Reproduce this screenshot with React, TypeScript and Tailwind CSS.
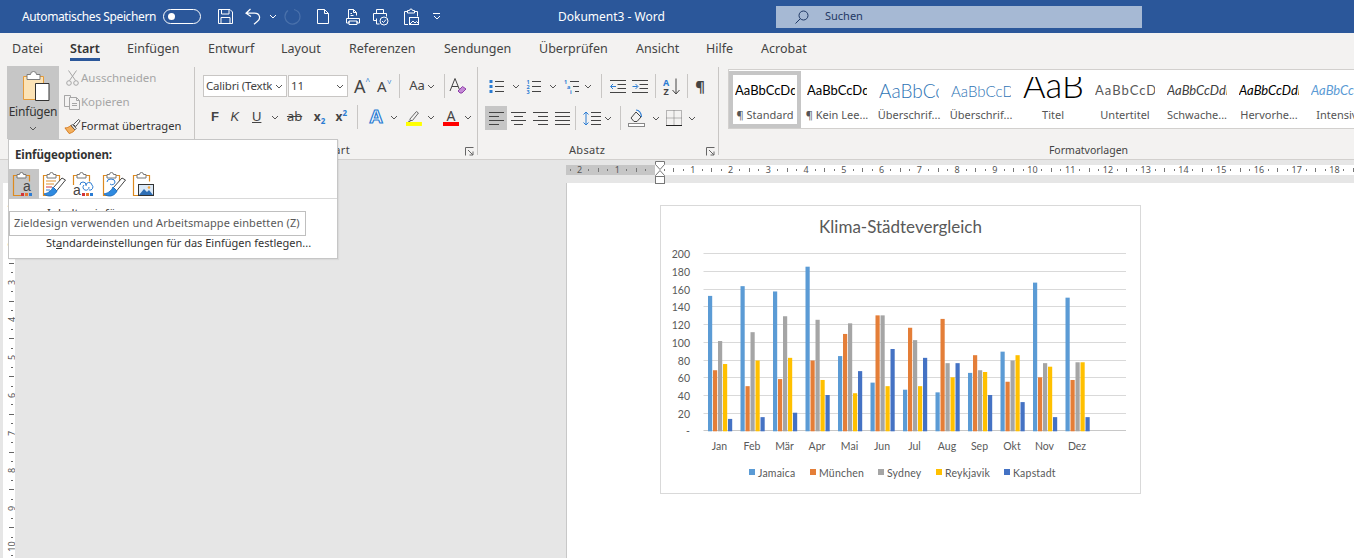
import type { ReactNode } from "react";

const months = ["Jan", "Feb", "Mär", "Apr", "Mai", "Jun", "Jul", "Aug", "Sep", "Okt", "Nov", "Dez"];
const seriesColors = ["#5b9bd5", "#e47e38", "#a5a5a5", "#ffc000", "#4472c4"];
const chartData = [
  [153, 69, 102, 76, 14],
  [164, 51, 112, 80, 16],
  [158, 59, 130, 83, 21],
  [186, 80, 126, 58, 41],
  [85, 110, 122, 43, 68],
  [55, 131, 131, 51, 93],
  [47, 117, 103, 51, 83],
  [44, 127, 77, 61, 77],
  [66, 86, 69, 67, 41],
  [90, 56, 80, 86, 33],
  [168, 61, 77, 73, 16],
  [151, 58, 78, 78, 16],
];
const legend = [
  { name: "Jamaica", x: 89, color: "#5b9bd5" },
  { name: "München", x: 150, color: "#e47e38" },
  { name: "Sydney", x: 218, color: "#a5a5a5" },
  { name: "Reykjavik", x: 276, color: "#ffc000" },
  { name: "Kapstadt", x: 344, color: "#4472c4" },
];

const tabs = [
  { label: "Datei", width: "w-[58px]" },
  { label: "Start", width: "w-[57px]", active: true },
  { label: "Einfügen", width: "w-[81px]" },
  { label: "Entwurf", width: "w-[73px]" },
  { label: "Layout", width: "w-[68px]" },
  { label: "Referenzen", width: "w-[95px]" },
  { label: "Sendungen", width: "w-[95px]" },
  { label: "Überprüfen", width: "w-[97px]" },
  { label: "Ansicht", width: "w-[70px]" },
  { label: "Hilfe", width: "w-[55px]" },
  { label: "Acrobat", width: "w-[60px]" },
];

const styles = [
  { label: "¶ Standard", preview: "AaBbCcDdEe", cls: "text-[13px] text-black", selected: true },
  { label: "¶ Kein Lee...", preview: "AaBbCcDdEe", cls: "text-[13px] text-black" },
  { label: "Überschrif...", preview: "AaBbCcDd", cls: "text-[19px] text-[#2e74b5] font-light" },
  { label: "Überschrif...", preview: "AaBbCcDdEe", cls: "text-[15px] text-[#2e74b5] font-light" },
  { label: "Titel", preview: "AaB", cls: "text-[34.500px] text-black font-light leading-[36px] mb-[15px]" },
  { label: "Untertitel", preview: "AaBbCcDdEe", cls: "text-[13px] text-[#595959] tracking-[1px]" },
  { label: "Schwache...", preview: "AaBbCcDdEe", cls: "text-[13px] text-[#404040] italic" },
  { label: "Hervorhe...", preview: "AaBbCcDdEe", cls: "text-[13px] text-black italic" },
  { label: "Intensiv...", preview: "AaBbCcDdEe", cls: "text-[13px] text-[#5b9bd5] italic" },
];

function Chev({ color = "#555", className = "" }: { color?: string; className?: string }) {
  return (
    <svg width="8" height="5" viewBox="0 0 8 5" className={className}>
      <path d="M1 1l3 3 3-3" fill="none" stroke={color} strokeWidth="1" />
    </svg>
  );
}

function Launcher() {
  return (
    <svg width="9" height="9" viewBox="0 0 9 9">
      <path d="M0.5 8.5V0.5H8.5M3 3l5 5M8 4.5V8H4.5" fill="none" stroke="#666" strokeWidth="1" />
    </svg>
  );
}

function VSep() {
  return <div className="w-px h-[24px] bg-[#c8c6c4] shrink-0" />;
}

function GroupSep() {
  return <div className="w-px h-[88px] mt-[1px] bg-[#c8c6c4] shrink-0" />;
}

function Cell({ w, children }: { w: string; children: ReactNode }) {
  return <div className={`${w} h-full flex items-center justify-center shrink-0`}>{children}</div>;
}

/* title bar icons */
function SaveIcon() {
  return (
    <svg width="17" height="17" viewBox="0 0 17 17" fill="none" stroke="#fff">
      <path d="M1.5 1.5h11.5l2.5 2.5v11.5h-14z" />
      <path d="M4.5 1.5v4.5h7.5v-4.5M4 15.5v-6h9v6" />
    </svg>
  );
}
function UndoIcon() {
  return (
    <svg width="16" height="17" viewBox="0 0 16 17" fill="none" stroke="#fff" strokeWidth="1.2">
      <path d="M5.5 1L1 5.2l5 3.3M1.2 5.2h8.3c5.5 0 6.5 5.5 3 8l-3.5 3" />
    </svg>
  );
}
function RedoIcon() {
  return (
    <svg width="17" height="17" viewBox="0 0 17 17" fill="none" stroke="#4a71ab" strokeWidth="1.2">
      <path d="M10 1.5c5 1.5 6 5 6 7a7.5 7.5 0 1 1-12-6" />
    </svg>
  );
}
function NewDocIcon() {
  return (
    <svg width="14" height="17" viewBox="0 0 14 17" fill="none" stroke="#fff">
      <path d="M1.5 1.5h7l4 4v10h-11zM8.5 1.5v4h4" />
    </svg>
  );
}
function PreviewIcon() {
  return (
    <svg width="16" height="17" viewBox="0 0 16 17" fill="none" stroke="#fff">
      <path d="M3.5 10V1.5h5l3 3v3M8.5 1.5v3h3" />
      <path d="M5.5 7.5h3M5.5 5.5h1.5" />
      <path d="M1.5 15v-4.5h13V15h-2.5v-2h-8v2zM4 13v3.5h8V13" />
    </svg>
  );
}
function QuickPrintIcon() {
  return (
    <svg width="17" height="18" viewBox="0 0 17 18" fill="none" stroke="#fff">
      <path d="M4.5 5V1.5h7V5M1.5 12.5V5.5h13v3M1.5 12.5h3M4.5 10.5V16h3" />
      <circle cx="12" cy="13" r="4" />
      <path d="M10 13l1.5 1.5 2.5-3" />
    </svg>
  );
}
function PastePicIcon() {
  return (
    <svg width="16" height="18" viewBox="0 0 16 18" fill="none" stroke="#fff">
      <path d="M4 3.5H1.5v13H5M12 3.5h2.5v5M4.500 5V2.500h2a1.500 1.500 0 0 1 3 0h2V5z" />
      <rect x="6.500" y="9.500" width="9" height="7" />
      <path d="M7 16l3-3 2 2 1.500-1.500 2 2" />
    </svg>
  );
}

/* clipboard group icons */
function PasteBig() {
  return (
    <svg width="28" height="30" viewBox="0 0 28 30" fill="none" className="ml-[5px]">
      <path d="M1.500 5.500h20v23h-20z" fill="#fce3b6" stroke="#e49a3a" />
      <path d="M5 3.500h3.500a3 3 0 0 1 6 0H18v5H5z" fill="#fff" stroke="#7a7a7a" />
      <path d="M13.500 12.500h13.500v17H13.500z" fill="#fff" stroke="#333" />
    </svg>
  );
}
function CutIcon() {
  return (
    <svg width="13" height="16" viewBox="0 0 13 16" fill="none" stroke="#a6a6a6">
      <path d="M2.500 0.500l7 10M10.500 0.500l-7 10" />
      <circle cx="3" cy="13" r="2.300" />
      <circle cx="10" cy="13" r="2.300" />
    </svg>
  );
}
function CopyIcon() {
  return (
    <svg width="17" height="16" viewBox="0 0 17 16" fill="none" stroke="#a6a6a6">
      <path d="M5 12.500H0.500V1.500H5M0.500 1.500h6v2" />
      <path d="M5.500 3.500h7l3 3v9h-10zM12.500 3.500v3h3M8 9.500h5M8 11.500h5" />
    </svg>
  );
}
function BrushIcon() {
  return (
    <svg width="18" height="17" viewBox="0 0 18 17">
      <path d="M1 10l4.500 6 2.500-1c2.500-1 3.500-3 3.500-3L7 7.500C5 9.500 3 10 1 10z" fill="#f3b05f" stroke="#d57a1e" />
      <path d="M7.500 7.500l4 4.500 1.500-1.500-4-4z" fill="#fff" stroke="#444" />
      <path d="M10 6.500l5.500-5.500 1.500 1.500-4.500 6z" fill="#fff" stroke="#444" />
    </svg>
  );
}

/* font group icons */
function ClearFormat() {
  return (
    <svg width="18" height="18" viewBox="0 0 18 18" fill="none">
      <path d="M1 14L6 1.500 11 14M3 9.500h6" stroke="#444" />
      <path d="M9 14l4.500-4.500 3.500 2.500-4 4h-2z" fill="#c48ad6" stroke="#8e3fa8" />
    </svg>
  );
}
function HighlightIcon() {
  return (
    <svg width="16" height="17" viewBox="0 0 16 17">
      <path d="M4 10l6.500-7.500 2 1.500L6.500 11.500H4z" fill="none" stroke="#666" />
      <path d="M3 11.500l-1 1.500h3z" fill="#666" />
      <rect x="0" y="13" width="16" height="4" fill="#ffff00" />
    </svg>
  );
}

/* paragraph group icons */
function ListLines() {
  return <path d="M6 2.500h9M6 7.500h9M6 12.500h9" fill="none" stroke="#444" />;
}
function BulletsIcon() {
  return (
    <svg width="16" height="15" viewBox="0 0 16 15">
      <rect x="0.500" y="1" width="3" height="3" fill="#2b7cd3" />
      <rect x="0.500" y="6" width="3" height="3" fill="#2b7cd3" />
      <rect x="0.500" y="11" width="3" height="3" fill="#2b7cd3" />
      <ListLines />
    </svg>
  );
}
function NumbersIcon() {
  return (
    <svg width="16" height="15" viewBox="0 0 16 15">
      <text x="0.500" y="4.500" fontSize="5.500" fontWeight="700" fill="#2b7cd3">1</text>
      <text x="0.500" y="9.500" fontSize="5.500" fontWeight="700" fill="#2b7cd3">2</text>
      <text x="0.500" y="14.500" fontSize="5.500" fontWeight="700" fill="#2b7cd3">3</text>
      <ListLines />
    </svg>
  );
}
function MultiLevelIcon() {
  return (
    <svg width="16" height="15" viewBox="0 0 16 15">
      <text x="0" y="4.500" fontSize="5.500" fontWeight="700" fill="#2b7cd3">1</text>
      <text x="3" y="9.500" fontSize="5.500" fontWeight="700" fill="#2b7cd3">a</text>
      <text x="6" y="14.500" fontSize="5.500" fontWeight="700" fill="#2b7cd3">i</text>
      <path d="M6 2.500h9M9 7.500h6M11 12.500h4" fill="none" stroke="#444" />
    </svg>
  );
}
function IndentIcon({ flip }: { flip?: boolean }) {
  return (
    <svg width="16" height="13" viewBox="0 0 16 13" fill="none">
      <path d="M0 0.500h16M7.500 4.500h8.500M7.500 8.500h8.500M0 12.500h16" stroke="#444" />
      {flip ? (
        <path d="M0.500 6.500h5M3.500 4l2.500 2.500L3.500 9" stroke="#2b7cd3" />
      ) : (
        <path d="M6 6.500H1M3 4L0.500 6.500 3 9" stroke="#2b7cd3" />
      )}
    </svg>
  );
}
function SortIcon() {
  return (
    <svg width="18" height="17" viewBox="0 0 18 17" fill="none">
      <text x="0" y="7.500" fontSize="9" fontWeight="700" fill="#2b7cd3">A</text>
      <text x="0.500" y="16.500" fontSize="9" fontWeight="700" fill="#444">Z</text>
      <path d="M13 0.500v15M9.500 12l3.500 4 3.500-4" stroke="#444" />
    </svg>
  );
}
function AlignIcon({ kind }: { kind: "left" | "center" | "right" | "justify" }) {
  const d = {
    left: "M0 0.500h15M0 4.500h10M0 8.500h15M0 12.500h10",
    center: "M0 0.500h15M3 4.500h9M0 8.500h15M3 12.500h9",
    right: "M0 0.500h15M5 4.500h10M0 8.500h15M5 12.500h10",
    justify: "M0 0.500h15M0 4.500h15M0 8.500h15M0 12.500h15",
  }[kind];
  return (
    <svg width="15" height="13" viewBox="0 0 15 13">
      <path d={d} fill="none" stroke="#444" />
    </svg>
  );
}
function LineSpacingIcon() {
  return (
    <svg width="18" height="15" viewBox="0 0 18 15" fill="none">
      <path d="M3 1v13M0.500 3.500L3 1l2.500 2.500M0.500 11.500L3 14l2.500-2.500" stroke="#2b7cd3" />
      <path d="M8 1.500h10M8 5.500h10M8 9.500h10M8 13.500h10" stroke="#444" />
    </svg>
  );
}
function ShadingIcon() {
  return (
    <svg width="17" height="18" viewBox="0 0 17 18" fill="none">
      <path d="M3 9l5-6 5 5-4 4.500H6z" stroke="#444" />
      <path d="M8 1c3 0 5.500 3 5.500 7" stroke="#2b7cd3" strokeWidth="1.200" />
      <rect x="0.500" y="14.500" width="16" height="3" fill="#fff" stroke="#888" />
    </svg>
  );
}
function BordersIcon() {
  return (
    <svg width="16" height="16" viewBox="0 0 16 16" fill="none">
      <path d="M0.500 0.500h15v15h-15zM8 0.500v15M0.500 8h15" stroke="#777" strokeDasharray="1 1" />
      <path d="M0 15.500h16" stroke="#222" />
    </svg>
  );
}

/* paste options */
function ClipBase() {
  return (
    <>
      <path d="M5 4.500H1.500v20H9M14 4.500h3.500v6" fill="none" stroke="#dd8a1f" strokeWidth="1.200" />
      <path d="M5 7V3.500h2.500a2 2 0 0 1 4 0H14V7z" fill="#fff" stroke="#777" />
    </>
  );
}
function Swatches({ x, y }: { x: number; y: number }) {
  return (
    <>
      <rect x={x} y={y} width="3" height="3" fill="#d13438" />
      <rect x={x + 4} y={y} width="3" height="3" fill="#e8762c" />
      <rect x={x + 8} y={y} width="3" height="3" fill="#2b7cd3" />
    </>
  );
}
function Brush() {
  return (
    <>
      <path d="M11 17l9-10 3.500 2-9 11z" fill="#fff" stroke="#444" />
      <path d="M11 16c-1 3-4 6-9 7 4 3 10 3 13-3z" fill="#2f8ae0" stroke="#1f6fc0" />
    </>
  );
}
function PasteOption({ kind }: { kind: number }) {
  return (
    <svg width="24" height="26" viewBox="0 0 24 26">
      <ClipBase />
      {kind === 0 && (
        <>
          <text x="11" y="20" fontSize="14" fill="#444" fontFamily="Liberation Sans">a</text>
          <Swatches x={9} y={22} />
        </>
      )}
      {kind === 1 && (
        <>
          <path d="M4 10h10M4 13h8" stroke="#e0912f" fill="none" />
          <path d="M4 16h6" stroke="#d13438" fill="none" />
          <path d="M4 19h4" stroke="#2b7cd3" fill="none" />
          <Brush />
        </>
      )}
      {kind === 2 && (
        <>
          <rect x="0" y="14" width="9" height="12" fill="#fff" />
          <text x="1" y="24" fontSize="14" fill="#444" fontFamily="Liberation Sans">a</text>
          <Swatches x={10} y={22} />
          <path d="M8 14a3 3 0 0 1 6 0M12 14a3 3 0 1 0 5 2M14 15a3 3 0 0 1 6-1 3 3 0 0 1-3 5" fill="none" stroke="#2b7cd3" />
        </>
      )}
      {kind === 3 && (
        <>
          <path d="M5 11a4 3 0 0 1 8 0 3 3 0 0 1-5 2" fill="none" stroke="#2b7cd3" />
          <Brush />
        </>
      )}
      {kind === 4 && (
        <>
          <rect x="6.500" y="13.500" width="15" height="11" fill="#dbe9f7" stroke="#333" />
          <path d="M7 24l5-6 3 3 2-2 4 5z" fill="#2f6fb5" />
          <circle cx="17" cy="16.500" r="1.300" fill="#f2a33a" />
        </>
      )}
    </svg>
  );
}

/* rulers */
function HTick({ k, show }: { k: number; show: number }) {
  const body =
    k % 4 === 0 ? (
      <span className="text-[9px] leading-[10px] text-[#555]">{show}</span>
    ) : k % 2 === 0 ? (
      <span className="w-px h-[4px] bg-[#777]" />
    ) : (
      <span className="w-px h-[2px] bg-[#777]" />
    );
  return <div className="w-[9.45px] h-full shrink-0 flex items-center justify-center">{body}</div>;
}
function VTick({ k, show }: { k: number; show: number }) {
  const body =
    k % 4 === 0 ? (
      <span className="text-[9px] leading-[9px] text-[#555] whitespace-nowrap -rotate-90">{show}</span>
    ) : k % 2 === 0 ? (
      <span className="h-px w-[5px] bg-[#666]" />
    ) : (
      <span className="h-px w-[2px] bg-[#666]" />
    );
  return <div className="h-[9.45px] w-full shrink-0 flex items-center justify-center">{body}</div>;
}

function Chart() {
  const base = 225.3;
  const scale = 0.885;
  return (
    <svg width="479" height="287" viewBox="0 0 479 287" className="block [font-family:Lato,sans-serif]">
      <text x="239.500" y="27" textAnchor="middle" fontSize="17" fill="#595959">Klima-Städtevergleich</text>
      {[200, 180, 160, 140, 120, 100, 80, 60, 40, 20, 0].map((v) => (
        <g key={v}>
          <path d={`M42.500 ${Math.round(base - v * scale) - 0.5}H465`} stroke={v === 0 ? "#c8c8c8" : "#d9d9d9"} />
          <text x="29" y={base - v * scale + 4} textAnchor="end" fontSize="10.500" fill="#595959">{v === 0 ? "-" : v}</text>
        </g>
      ))}
      {chartData.map((group, i) => (
        <g key={months[i]}>
          {group.map((v, j) => (
            <rect key={j} x={47 + i * 32.5 + j * 5} y={base - v * scale} width="4.200" height={v * scale} fill={seriesColors[j]} />
          ))}
          <text x={58.500 + i * 32.5} y="244" textAnchor="middle" fontSize="10.500" fill="#595959">{months[i]}</text>
        </g>
      ))}
      {legend.map((l) => (
        <g key={l.name}>
          <rect x={l.x - 1} y="263" width="6" height="6" fill={l.color} />
          <text x={l.x + 8} y="271" fontSize="10.500" fill="#595959" letterSpacing="0.2">{l.name}</text>
        </g>
      ))}
    </svg>
  );
}

export default function App() {
  const leftTicks = Array.from({ length: 11 }, (_, i) => i - 11);
  const rightTicks = Array.from({ length: 75 }, (_, i) => i + 1);
  const sideTicks = Array.from({ length: 41 }, (_, i) => i);

  return (
    <div className="relative w-[1354px] h-[558px] overflow-hidden bg-[#e6e6e6] text-[12px] text-[#444] [font-family:'Noto_Sans',sans-serif]">
      {/* title bar */}
      <div className="h-[33px] bg-[#2b579a] flex items-center text-white">
        <span className="ml-[22px] w-[141px] whitespace-nowrap text-[12px] tracking-[-0.38px]">Automatisches Speichern</span>
        <div className="w-[38px] h-[15px] rounded-full border border-white flex items-center pl-[4px]">
          <div className="w-[7px] h-[7px] rounded-full bg-white" />
        </div>
        <div className="flex items-center h-full ml-[16px]">
          <Cell w="w-[17px]"><SaveIcon /></Cell>
          <div className="w-[11px]" />
          <Cell w="w-[16px]"><UndoIcon /></Cell>
          <Cell w="w-[23px]"><Chev color="#fff" /></Cell>
          <Cell w="w-[17px]"><RedoIcon /></Cell>
          <div className="w-[15px]" />
          <Cell w="w-[14px]"><NewDocIcon /></Cell>
          <div className="w-[15px]" />
          <Cell w="w-[16px]"><PreviewIcon /></Cell>
          <div className="w-[11px]" />
          <Cell w="w-[17px]"><QuickPrintIcon /></Cell>
          <div className="w-[14px]" />
          <Cell w="w-[16px]"><PastePicIcon /></Cell>
          <div className="w-[13px]" />
          <Cell w="w-[9px]">
            <div className="flex flex-col items-center gap-[1px]">
              <div className="w-[7px] h-px bg-white" />
              <Chev color="#fff" />
            </div>
          </Cell>
        </div>
        <span className="ml-[117px] w-[218px] whitespace-nowrap text-[12px]">Dokument3 - Word</span>
        <div className="w-[366px] h-[22px] bg-[#a6b9d4] flex items-center pl-[19px] text-[#1f3864] text-[11px]">
          <svg width="14" height="14" viewBox="0 0 14 14" fill="none" stroke="#1f3864">
            <circle cx="8.500" cy="5.500" r="4.500" />
            <path d="M5.300 8.700L0.500 13.500" />
          </svg>
          <span className="ml-[16px]">Suchen</span>
        </div>
      </div>

      {/* tabs */}
      <div className="h-[30px] bg-[#f3f2f1] flex pl-[12px] text-[12.500px] text-[#444]">
        {tabs.map((t) => (
          <div key={t.label} className={`${t.width} shrink-0`}>
            <span className={`inline-block h-[28px] pt-[6px] leading-[19px] border-b-[3px] whitespace-nowrap ${t.active ? "border-[#2b579a] font-semibold text-[#333]" : "border-transparent"}`}>
              {t.label}
            </span>
          </div>
        ))}
      </div>

      {/* ribbon */}
      <div className="h-[97px] bg-[#f3f2f1] border-b border-[#d2d0ce] flex pt-[3px] overflow-hidden">
        {/* Zwischenablage */}
        <div className="w-[194px] h-[93px] shrink-0 flex pl-[7px]">
          <div className="w-[52px] h-[73px] bg-[#c6c6c6] flex flex-col items-center pt-[5px]">
            <PasteBig />
            <span className="mt-[3px] leading-[16px] text-[#333] tracking-[-0.2px]">Einfügen</span>
            <Chev className="mt-[6px]" />
          </div>
          <div className="ml-[5px] flex flex-col w-[128px]">
            <div className="h-[24px] flex items-center text-[#a6a6a6] text-[11.500px]">
              <div className="w-[17px] flex justify-center"><CutIcon /></div>
              <span>Ausschneiden</span>
            </div>
            <div className="h-[24px] flex items-center text-[#a6a6a6] text-[11.500px]">
              <div className="w-[17px] flex justify-center"><CopyIcon /></div>
              <span>Kopieren</span>
            </div>
            <div className="h-[24px] flex items-center text-[#333] text-[11.200px]">
              <div className="w-[17px] flex justify-center"><BrushIcon /></div>
              <span className="whitespace-nowrap">Format übertragen</span>
            </div>
          </div>
        </div>
        <GroupSep />

        {/* Schriftart */}
        <div className="w-[282px] h-[93px] shrink-0 flex flex-col pl-[8px]">
          <div className="h-[22px] mt-[9px] flex items-center">
            <div className="w-[84px] h-[22px] bg-white border border-[#c8c6c4] flex items-center justify-between pl-[2px] pr-[3px] overflow-hidden">
              <span className="w-[66px] overflow-hidden whitespace-nowrap text-[11.500px] tracking-[-0.2px]">Calibri (Textkörper)</span>
              <Chev />
            </div>
            <div className="w-[60px] h-[22px] ml-[1px] bg-white border border-[#c8c6c4] flex items-center justify-between pl-[2px] pr-[3px]">
              <span className="text-[11.500px]">11</span>
              <Chev />
            </div>
            <div className="w-[22px] flex items-center justify-center text-[18px] leading-[20px] ml-[3px]">
              A<span className="text-[8px] text-[#2b7cd3] self-start leading-[10px]">^</span>
            </div>
            <div className="w-[22px] flex items-center justify-center text-[15px] leading-[20px]">
              A<span className="text-[8px] text-[#2b7cd3] self-start leading-[10px] rotate-180">^</span>
            </div>
            <div className="w-[4px]" />
            <VSep />
            <div className="w-[44px] flex items-center justify-center gap-[2px] text-[13px]">Aa<Chev /></div>
            <VSep />
            <div className="w-[24px] flex justify-center ml-[1px]"><ClearFormat /></div>
          </div>
          <div className="h-[22px] mt-[9px] flex items-center text-[#444]">
            <div className="w-[22px] text-center font-bold text-[13px] [font-family:'Liberation_Sans',sans-serif] pl-[2px]">F</div>
            <div className="w-[20px] text-center italic text-[13px] [font-family:'Liberation_Sans',sans-serif]">K</div>
            <div className="w-[24px] text-center underline text-[13px] [font-family:'Liberation_Sans',sans-serif]">U</div>
            <Cell w="w-[12px]"><Chev /></Cell>
            <div className="w-[28px] text-center line-through text-[13px]">ab</div>
            <div className="w-[22px] text-center font-bold text-[12px]">x<span className="text-[8px] text-[#2b7cd3] align-sub leading-[0]">2</span></div>
            <div className="w-[22px] text-center font-bold text-[12px]">x<span className="text-[8px] text-[#2b7cd3] align-super leading-[0]">2</span></div>
            <div className="w-[5px]" />
            <VSep />
            <div className="w-[30px] text-center font-bold text-[19px] leading-[20px] text-white pl-[6px] [-webkit-text-stroke:1.200px_#2b7cd3] [font-family:'Liberation_Sans',sans-serif]">A</div>
            <Cell w="w-[12px]"><Chev /></Cell>
            <div className="w-[6px]" />
            <HighlightIcon />
            <Cell w="w-[18px]"><Chev /></Cell>
            <div className="w-[3px]" />
            <div className="w-[16px] flex flex-col items-center">
              <span className="text-[14px] leading-[13px]">A</span>
              <div className="w-[16px] h-[4px] bg-[#ff0000]" />
            </div>
            <Cell w="w-[18px]"><Chev /></Cell>
          </div>
          <div className="flex-1 flex items-end pr-[3px] justify-between">
            <span className="ml-[96px] leading-[18px] text-[11px] tracking-[0.3px]">Schriftart</span>
            <span className="pb-[3px]"><Launcher /></span>
          </div>
        </div>
        <GroupSep />

        {/* Absatz */}
        <div className="w-[240px] h-[93px] shrink-0 flex flex-col pl-[7px]">
          <div className="h-[22px] mt-[9px] flex items-center">
            <div className="w-[4px]" />
            <BulletsIcon />
            <Cell w="w-[21px]"><Chev /></Cell>
            <NumbersIcon />
            <Cell w="w-[22px]"><Chev /></Cell>
            <MultiLevelIcon />
            <Cell w="w-[16px]"><Chev /></Cell>
            <div className="w-[5px]" />
            <VSep />
            <div className="w-[8px]" />
            <IndentIcon />
            <div className="w-[6px]" />
            <IndentIcon flip />
            <div className="w-[7px]" />
            <VSep />
            <div className="w-[7px]" />
            <SortIcon />
            <div className="w-[6px]" />
            <VSep />
            <div className="w-[24px] text-center font-bold text-[15px] leading-[20px]">¶</div>
          </div>
          <div className="h-[24px] mt-[9px] flex items-center">
            <div className="w-[22px] h-[24px] bg-[#c6c6c6] flex items-center justify-center"><AlignIcon kind="left" /></div>
            <div className="w-[26px] flex justify-center ml-[-2px]"><AlignIcon kind="center" /></div>
            <div className="w-[18px] flex justify-center"><AlignIcon kind="right" /></div>
            <div className="w-[26px] flex justify-center"><AlignIcon kind="justify" /></div>
            <VSep />
            <div className="w-[7px]" />
            <LineSpacingIcon />
            <Cell w="w-[14px]"><Chev /></Cell>
            <div className="w-[5px]" />
            <VSep />
            <div className="w-[7px]" />
            <ShadingIcon />
            <Cell w="w-[21px]"><Chev /></Cell>
            <BordersIcon />
            <Cell w="w-[20px]"><Chev /></Cell>
          </div>
          <div className="flex-1 flex items-end pr-[3px] justify-between">
            <span className="ml-[84px] leading-[18px] text-[11px] tracking-[0.3px]">Absatz</span>
            <span className="pb-[3px]"><Launcher /></span>
          </div>
        </div>
        <GroupSep />

        {/* Formatvorlagen */}
        <div className="w-[738px] h-[93px] shrink-0 flex flex-col pl-[9px]">
          <div className="w-[729px] h-[60px] bg-white border border-[#d2d0ce] flex mt-[3px] pt-[1px] overflow-hidden shrink-0">
            {styles.map((s, i) => (
              <div
                key={i}
                className={`w-[72px] h-[57px] shrink-0 flex flex-col items-center overflow-hidden border-[4px] ${s.selected ? "border-[#c6c6c6]" : "border-transparent"}`}
              >
                <div className={`${s.label === "Titel" ? "h-[30px] mt-[2px]" : "h-[32px]"} w-[60px] shrink-0 overflow-hidden flex items-center`}>
                  <span className={`whitespace-nowrap [font-family:Lato,sans-serif] ${s.label === "Titel" ? "mx-auto" : ""} ${s.cls}`}>{s.preview}</span>
                </div>
                <span className="whitespace-nowrap text-[11px] leading-[16px] text-[#555]">{s.label}</span>
              </div>
            ))}
          </div>
          <div className="flex-1 flex items-end justify-center pr-[8px]">
            <span className="leading-[18px] text-[10.500px]">Formatvorlagen</span>
          </div>
        </div>
      </div>

      {/* document area */}
      <div className="flex h-[398px]">
        <div className="w-[566px] shrink-0 flex pl-[3px] pt-[23px] overflow-hidden">
          <div className="w-[12px] h-[375px] bg-white pl-[5px] overflow-hidden">
            <div className="w-[7px] flex flex-col pt-[19px]">
              {sideTicks.map((i) => (
                <VTick key={i} k={i} show={i / 4 + 1} />
              ))}
            </div>
          </div>
        </div>
        <div className="flex-1 flex flex-col min-w-0">
          <div className="h-[23px] pt-[5px] shrink-0">
            <div className="h-[10px] flex">
              <div className="w-[89px] bg-[#c6c6c6] flex justify-end pr-[4.700px] overflow-hidden shrink-0">
                {leftTicks.map((k) => (
                  <HTick key={k} k={k} show={-k / 4} />
                ))}
              </div>
              <div className="flex-1 bg-white flex pl-[4.700px] overflow-hidden">
                {rightTicks.map((k) => (
                  <HTick key={k} k={k} show={k / 4} />
                ))}
              </div>
            </div>
          </div>
          <div className="flex-1 bg-white border-l border-[#c8c8c8] pl-[93px] pt-[22px]">
            <div className="w-[481px] h-[289px] border border-[#d9d9d9] bg-white">
              <Chart />
            </div>
          </div>
        </div>
      </div>

      {/* indent marker on ruler */}
      <svg width="10" height="24" viewBox="0 0 10 24" className="absolute left-[655px] top-[161px]">
        <path d="M0.500 0.500h9v3l-4.500 5-4.500-5zM0.500 14.500l4.500-5 4.500 5v1h-9z" fill="#fff" stroke="#777" />
        <rect x="0.500" y="15.500" width="9" height="7" fill="#fff" stroke="#777" />
      </svg>

      {/* paste popup */}
      <div className="absolute left-[8px] top-[139px] w-[330px] h-[120px] bg-white border border-[#c6c6c6] text-[#333] shadow-[1px_1px_1px_rgba(0,0,0,0.05)]">
        <div className="pl-[6px] pt-[6px] h-[29px] font-bold text-[11.500px] leading-[18px] tracking-[-0.1px] text-[#333]">Einfügeoptionen:</div>
        <div className="flex h-[30px] border-b border-[#d9d9d9]">
          <div className="w-[30px] h-[30px] bg-[#c6c6c6] flex items-center justify-center"><PasteOption kind={0} /></div>
          <div className="w-[30px] h-[30px] flex items-center justify-center"><PasteOption kind={1} /></div>
          <div className="w-[30px] h-[30px] flex items-center justify-center"><PasteOption kind={2} /></div>
          <div className="w-[30px] h-[30px] flex items-center justify-center"><PasteOption kind={3} /></div>
          <div className="w-[30px] h-[30px] flex items-center justify-center"><PasteOption kind={4} /></div>
        </div>
        <div className="pl-[38px] h-[28px] pt-[6px] leading-[16px] text-[11.500px]">Inhalte einfügen...</div>
        <div className="pl-[37px] pt-[8px] leading-[16px] text-[11px] whitespace-nowrap">
          St<span className="underline">a</span>ndardeinstellungen für das Einfügen festlegen...
        </div>
        {/* tooltip */}
        <div className="absolute left-0 top-[71px] w-[297px] h-[25px] bg-white border border-[#bfbfbf] flex items-center pl-[4px] text-[#595959] text-[11px] tracking-[0.1px] whitespace-nowrap">
          Zieldesign verwenden und Arbeitsmappe einbetten (Z)
        </div>
      </div>
    </div>
  );
}
